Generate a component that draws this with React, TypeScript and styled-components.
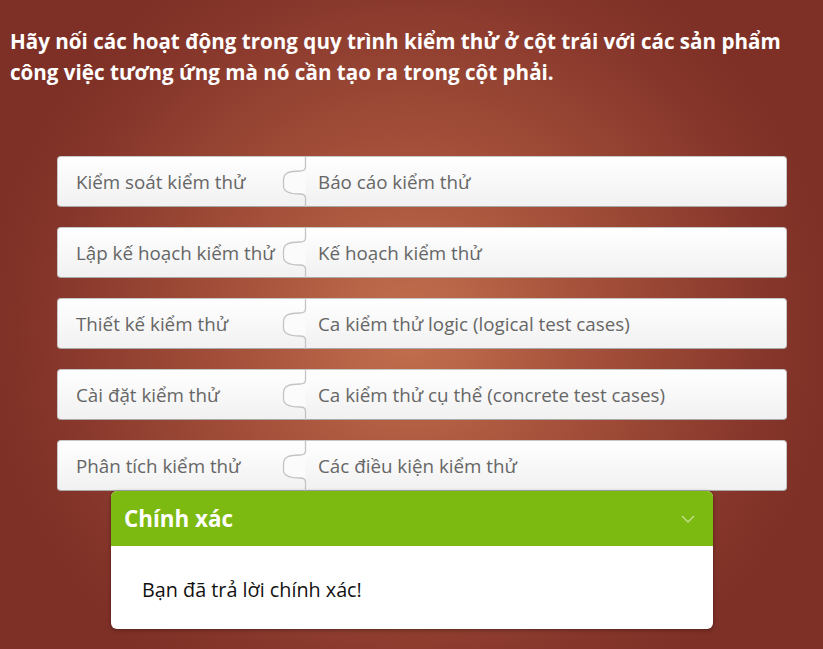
import * as React from 'react';
import styled, {createGlobalStyle} from 'styled-components';

const GlobalStyle = createGlobalStyle`
  html, body {
    margin: 0;
    padding: 0;
  }
  body {
    font-family: 'Open Sans', 'Noto Sans', sans-serif;
  }
`;

const Stage = styled.div`
  width: 823px;
  height: 649px;
  overflow: hidden;
  box-sizing: border-box;
  padding: 26px 0 0 10px;
  background: radial-gradient(ellipse 430px 420px at 410px 330px, #c3704f 0%, #a24e39 45%, #85352a 85%, #7e3026 100%);
  display: flex;
  flex-direction: column;
`;

const Question = styled.div`
  color: #fff;
  font-weight: 700;
  font-size: 20.6px;
  line-height: 31px;
  width: 800px;
`;

const Rows = styled.div`
  margin: 68px 0 0 47px;
  width: 730px;
  display: flex;
  flex-direction: column;
  gap: 20px;
`;

const Row = styled.div`
  position: relative;
  display: flex;
  height: 51px;
`;

const Card = styled.div<{ side: 'left' | 'right' }>`
  box-sizing: border-box;
  height: 100%;
  display: flex;
  align-items: center;
  font-size: 18.8px;
  color: #666;
  white-space: nowrap;
  background: linear-gradient(#ffffff, #f1f1f1);
  border: 1px solid #c6c6c6;
  border-bottom-color: #a9a9a9;
  ${p => p.side === 'left'
    ? `
      width: 248px;
      padding-left: 18px;
      border-right: none;
      border-radius: 4px 0 0 4px;
    `
    : `
      flex: 1;
      padding-left: 13px;
      border-left: none;
      border-radius: 0 4px 4px 0;
    `}
`;

const Joint = styled.svg`
  position: absolute;
  left: 225px;
  top: 0;
  width: 26px;
  height: 51px;
  pointer-events: none;
`;

const Feedback = styled.div`
  position: absolute;
  left: 111px;
  top: 491px;
  width: 602px;
  border-radius: 6px;
  overflow: hidden;
  background: #fff;
  box-shadow: 0 1px 4px rgba(0, 0, 0, 0.35);
`;

const FeedbackHeader = styled.div`
  height: 55px;
  background: #7cb911;
  display: flex;
  align-items: center;
  justify-content: space-between;
  padding: 0 18px 0 13px;
  color: #fff;
  font-weight: 700;
  font-size: 22.4px;
`;

const FeedbackBody = styled.div`
  height: 83px;
  display: flex;
  align-items: center;
  padding-left: 31px;
  padding-top: 4px;
  box-sizing: border-box;
  color: #111;
  font-size: 19.8px;
`;

const pairs = [
  ['Kiểm soát kiểm thử', 'Báo cáo kiểm thử'],
  ['Lập kế hoạch kiểm thử', 'Kế hoạch kiểm thử'],
  ['Thiết kế kiểm thử', 'Ca kiểm thử logic (logical test cases)'],
  ['Cài đặt kiểm thử', 'Ca kiểm thử cụ thể (concrete test cases)'],
  ['Phân tích kiểm thử', 'Các điều kiện kiểm thử'],
];

const App: React.FC = () => (
  <Stage>
    <GlobalStyle />
    <Question>
      Hãy nối các hoạt động trong quy trình kiểm thử ở cột trái với các sản phẩm
      công việc tương ứng mà nó cần tạo ra trong cột phải.
    </Question>
    <Rows>
      {pairs.map(([l, r]) => (
        <Row key={l}>
          <Card side="left">{l}</Card>
          <Card side="right">{r}</Card>
          <Joint viewBox="0 0 26 51">
            <path
              d="M23.5 0 V11 C23.5 14 22 15 18 15 C7 15 1.5 17 1.5 24 V30 C1.5 36 7 38 18 38 C22 38 23.5 39 23.5 42 V51"
              fill="#fbfbfb"
              stroke="#c4c4c4"
              strokeWidth="1.3"
            />
          </Joint>
        </Row>
      ))}
    </Rows>
    <Feedback>
      <FeedbackHeader>
        <span>Chính xác</span>
        <svg width="14" height="8" viewBox="0 0 14 8">
          <path d="M1 1 L7 7 L13 1" fill="none" stroke="#c9e59a" strokeWidth="1.2" />
        </svg>
      </FeedbackHeader>
      <FeedbackBody>Bạn đã trả lời chính xác!</FeedbackBody>
    </Feedback>
  </Stage>
);

export default App;
